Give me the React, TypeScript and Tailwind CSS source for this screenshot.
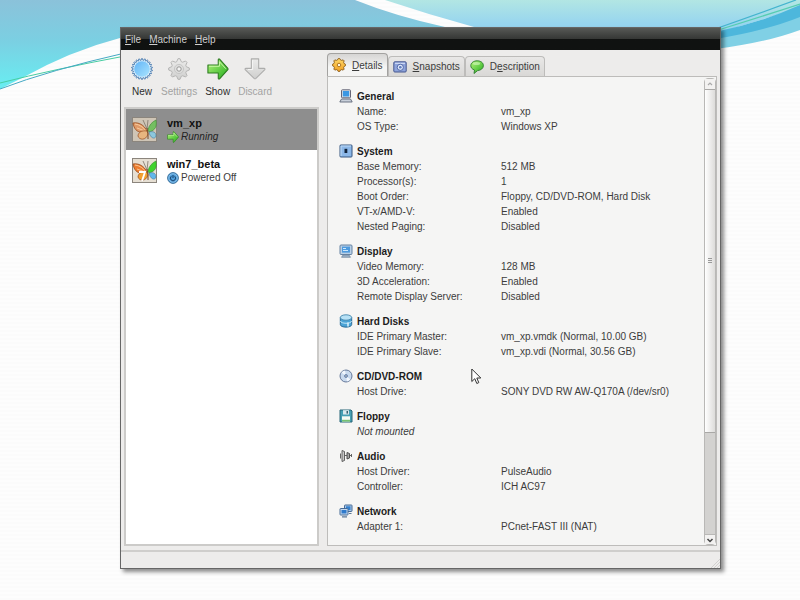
import { useState } from "react";
import type { ReactNode } from "react";

type Row = [label: string, value: string];

interface Section {
    title: string;
    icon: ReactNode;
    rows: Row[];
    note?: string;
}

const gearPath = (teeth: number, outer: number, inner: number) => {
    const points: string[] = [];
    for (let i = 0; i < teeth * 4; i++) {
        const r = i % 4 < 2 ? outer : inner;
        const a = ((i - 0.5) / (teeth * 4)) * Math.PI * 2 - Math.PI / 2;
        points.push(
            `${(12 + r * Math.cos(a)).toFixed(2)},${(12 + r * Math.sin(a)).toFixed(2)}`,
        );
    }
    return `M${points.join("L")}Z`;
};

const Gradients = () => (
    <svg width="0" height="0" className="absolute" aria-hidden="true">
        <defs>
            <linearGradient id="blue" x1="0" y1="0" x2="1" y2="1">
                <stop offset="0" stopColor="#62b4f6" />
                <stop offset="1" stopColor="#a9e4ff" />
            </linearGradient>
            <linearGradient id="green" x1="0" y1="0" x2="1" y2="1">
                <stop offset="0" stopColor="#b6f57c" />
                <stop offset="1" stopColor="#22ad1c" />
            </linearGradient>
            <linearGradient id="grey" x1="0" y1="0" x2="0" y2="1">
                <stop offset="0" stopColor="#ebebea" />
                <stop offset="1" stopColor="#cfcfce" />
            </linearGradient>
            <linearGradient id="gold" x1="0" y1="0" x2="0" y2="1">
                <stop offset="0" stopColor="#ffd968" />
                <stop offset="1" stopColor="#f0a023" />
            </linearGradient>
        </defs>
    </svg>
);

const NewIcon = () => (
    <svg viewBox="0 0 24 24" className="size-[22px]">
        <path d={gearPath(22, 11.4, 9.6)} fill="#d7edfb" stroke="#3a6ea8" strokeWidth="0.9" />
        <circle cx="12" cy="12" r="8.5" fill="url(#blue)" />
    </svg>
);

const SettingsIcon = () => (
    <svg viewBox="0 0 24 24" className="size-[22px]">
        <path
            d={gearPath(8, 11.3, 8.4)}
            fill="url(#grey)"
            stroke="#b0b0af"
            strokeWidth="1"
            strokeLinejoin="round"
        />
        <circle cx="12" cy="12" r="5" fill="#dededd" stroke="#c4c4c3" />
        <circle cx="12" cy="12" r="2.4" fill="#f4f4f3" stroke="#8f8f8e" />
    </svg>
);

const ArrowIcon = ({ className }: { className: string }) => (
    <svg viewBox="0 0 24 24" className={className}>
        <path
            d="M1 7.600h11.300V2q0-1.200 1.400-.8l8.800 9.800q.9 1 0 2l-8.800 9.800q-1.400.4-1.400-.8v-5.600H1z"
            fill="url(#green)"
            stroke="#2f7d22"
            strokeWidth="1.200"
            strokeLinejoin="round"
        />
        <path d="M2.300 9h11.200V4l7 7.700" fill="none" stroke="#d3fbb1" strokeWidth="1" />
    </svg>
);

const DiscardIcon = () => (
    <svg viewBox="0 0 24 24" className="size-[22px]">
        <path
            d="M8 1h8v10.300h6q1.200 0 .7 1.300l-9.700 9.600q-1 .9-2 0l-9.700-9.600q-.5-1.300.7-1.300h6z"
            fill="url(#grey)"
            stroke="#adadac"
            strokeWidth="1.200"
            strokeLinejoin="round"
        />
        <path d="M9.400 2.400v10.200H4.400" fill="none" stroke="#f7f7f6" strokeWidth="1" />
    </svg>
);

const ButterflyIcon = ({ seven = false }: { seven?: boolean }) => (
    <svg viewBox="0 0 25 25" className="h-[25px] w-[25px] shrink-0">
        <rect x="0.5" y="0.5" width="24" height="24" fill={seven ? "#e6dfd3" : "#cfc5b6"} stroke="#8b857d" />
        <path d="M15 12 11 3M15 12l1-9" stroke="#7d7468" strokeWidth="0.8" fill="none" />
        <path
            d="M15 14C12 8 7 5 1 6c1 6 4 9 8 9z"
            fill={seven ? "#ed7d30" : "#df9a69"}
            stroke="#974a1c"
            strokeWidth="0.8"
        />
        <path d="M3 7q7 1 11 7M5 11l8 3" stroke="#ffd7a8" strokeWidth="0.8" fill="none" />
        <path
            d="M15 14c-6-1-9 2-9 5 1 4 8 5 10-2z"
            fill={seven ? "#f4a12f" : "#e8b57f"}
            stroke="#974a1c"
            strokeWidth="0.7"
        />
        <path d="M16 13c1-5 4-8 8-10 1 6 0 10-7 12z" fill={seven ? "#3fd32d" : "#74bf61"} stroke="#3b8a33" strokeWidth="0.6" />
        <path d="M17 15c4-1 7 0 7 4-1 4-6 2-7-4z" fill={seven ? "#62b7ec" : "#8cc7dd"} stroke="#43789c" strokeWidth="0.6" />
        <path d="M15 11q1.500 5 1 11" stroke="#7b4a2a" strokeWidth="1" fill="none" />
        {seven && <path d="M7 14h6l-3 9" stroke="#fff" strokeWidth="1.900" fill="none" />}
    </svg>
);

const PowerIcon = () => (
    <svg viewBox="0 0 14 14" className="size-3">
        <circle cx="7" cy="7" r="6.3" fill="#4d9bd8" stroke="#29618f" />
        <circle cx="7" cy="7" r="4.9" fill="none" stroke="#a5d5f4" strokeWidth="0.8" />
        <path d="M5 5a3 3 0 1 0 4 0M7 3.500v3.500" stroke="#163f66" strokeWidth="1.100" fill="none" />
    </svg>
);

const GoldGearIcon = () => (
    <svg viewBox="0 0 24 24" className="size-3.5">
        <path d={gearPath(8, 11.3, 9)} fill="url(#gold)" stroke="#8a5a18" strokeWidth="1.6" strokeLinejoin="round" />
        <circle cx="12" cy="12" r="3" fill="#fff6dd" stroke="#a66a16" strokeWidth="1.5" />
    </svg>
);

const CameraIcon = () => (
    <svg viewBox="0 0 14 14" className="size-3.5">
        <rect x="0.8" y="1.800" width="12.400" height="10.200" rx="1" fill="#8ea4dc" stroke="#45568f" />
        <path d="M2 3.300h10" stroke="#dbe4fb" strokeWidth="1" />
        <circle cx="7.300" cy="7.300" r="3.100" fill="#dce7fb" stroke="#4b609f" strokeWidth="0.9" />
        <circle cx="7.300" cy="7.300" r="1.300" fill="#5c79bd" />
    </svg>
);

const BubbleIcon = () => (
    <svg viewBox="0 0 14 14" className="size-3.5">
        <path
            d="M7.200.8c3.500 0 6.200 2 6.200 4.800s-2.800 4.900-5.800 5L4 13.500l.5-3.500C2 9.200.8 7.500.8 5.700.8 2.800 3.800.8 7.200.8z"
            fill="url(#green)"
            stroke="#2b7a2c"
            strokeWidth="0.9"
        />
        <ellipse cx="6.500" cy="3.600" rx="3.600" ry="1.500" fill="#d4f9c0" opacity="0.6" />
    </svg>
);

const Small = ({ children }: { children: ReactNode }) => (
    <svg viewBox="0 0 14 14" className="size-3.5 shrink-0" aria-hidden="true">
        {children}
    </svg>
);

const sections: Section[] = [
    {
        title: "General",
        icon: (
            <Small>
                <rect x="2.500" y="0.800" width="9" height="8" rx="0.800" fill="#dfe4ea" stroke="#667" />
                <rect x="3.800" y="2" width="6.400" height="5.500" fill="#3b97e3" />
                <path d="M2.500 10h9l1.700 3H.8z" fill="#c9d0da" stroke="#5f6878" strokeWidth="0.9" />
            </Small>
        ),
        rows: [
            ["Name:", "vm_xp"],
            ["OS Type:", "Windows XP"],
        ],
    },
    {
        title: "System",
        icon: (
            <Small>
                <rect x="1" y="1" width="12" height="12" rx="0.800" fill="#8bb7e8" stroke="#35547e" />
                <path d="M2 12V2h10" fill="none" stroke="#c0dbf6" />
                <rect x="5.500" y="4.800" width="2.800" height="4.200" fill="#10243d" />
            </Small>
        ),
        rows: [
            ["Base Memory:", "512 MB"],
            ["Processor(s):", "1"],
            ["Boot Order:", "Floppy, CD/DVD-ROM, Hard Disk"],
            ["VT-x/AMD-V:", "Enabled"],
            ["Nested Paging:", "Disabled"],
        ],
    },
    {
        title: "Display",
        icon: (
            <Small>
                <rect x="1" y="1" width="12" height="9.500" rx="1" fill="#b8cfe6" stroke="#6482a2" />
                <rect x="3" y="2.600" width="8" height="6" fill="#4d9ade" />
                <path d="M4 4.500h3M4 6.500h5" stroke="#cde7fb" />
                <path d="M4 11h6l1.500 2.300h-9z" fill="#9db2c8" stroke="#6d8299" strokeWidth="0.7" />
            </Small>
        ),
        rows: [
            ["Video Memory:", "128 MB"],
            ["3D Acceleration:", "Enabled"],
            ["Remote Display Server:", "Disabled"],
        ],
    },
    {
        title: "Hard Disks",
        icon: (
            <Small>
                <path d="M1.300 3.500v7c0 3.500 11.400 3.500 11.400 0v-7z" fill="#4aa3d6" stroke="#2b6d99" />
                <ellipse cx="7" cy="3.500" rx="5.700" ry="2.700" fill="#b7e1f5" stroke="#4588ae" strokeWidth="0.9" />
                <path d="M1.500 7c0 3 11 3 11 0" fill="none" stroke="#bfe6f8" />
                <path d="M9 8.500v4" stroke="#dff3fc" strokeWidth="1.500" />
            </Small>
        ),
        rows: [
            ["IDE Primary Master:", "vm_xp.vmdk (Normal, 10.00 GB)"],
            ["IDE Primary Slave:", "vm_xp.vdi (Normal, 30.56 GB)"],
        ],
    },
    {
        title: "CD/DVD-ROM",
        icon: (
            <Small>
                <circle cx="7" cy="7" r="6" fill="#c9daee" stroke="#66799a" />
                <path d="M7 7 2.500 3.500A6 6 0 0 1 6 1.500zM7 7l4.500 3.500A6 6 0 0 1 8 12.500z" fill="#f2f7fd" />
                <circle cx="7" cy="7" r="1.500" fill="#fff" stroke="#4c6da0" strokeWidth="0.8" />
                <circle cx="7" cy="7" r="0.700" fill="#1f3558" />
            </Small>
        ),
        rows: [["Host Drive:", "SONY DVD RW AW-Q170A (/dev/sr0)"]],
    },
    {
        title: "Floppy",
        icon: (
            <Small>
                <path d="M1 1h11l1 1v11H1z" fill="#46a0b4" stroke="#286678" />
                <rect x="4" y="1.200" width="6" height="4.300" fill="#dbe9ee" />
                <rect x="7.500" y="2" width="1.500" height="2.600" fill="#37606e" />
                <rect x="3" y="7.300" width="8" height="5.300" fill="#f6fbf4" />
                <rect x="3" y="10.800" width="8" height="1.800" fill="#76c173" />
            </Small>
        ),
        rows: [],
        note: "Not mounted",
    },
    {
        title: "Audio",
        icon: (
            <Small>
                <path d="M3 1.500 5.500 2.500v9L3 12.500z" fill="#c9c9c9" stroke="#555" strokeWidth="0.9" />
                <path d="M8 3.500l2.500 1v4.500l-2.500 1z" fill="#a5a5a5" stroke="#444" strokeWidth="0.9" />
                <path d="M1.500 4.500v5M5.500 6.500H8M10.500 6.500h2M12.500 5v3" fill="none" stroke="#555" strokeWidth="0.9" />
            </Small>
        ),
        rows: [
            ["Host Driver:", "PulseAudio"],
            ["Controller:", "ICH AC97"],
        ],
    },
    {
        title: "Network",
        icon: (
            <Small>
                <rect x="5.500" y="1" width="7.500" height="6.500" rx="0.600" fill="#a9c6e6" stroke="#456a96" />
                <rect x="7" y="2.300" width="4.500" height="3.700" fill="#3481cf" />
                <rect x="1" y="4.500" width="8" height="6.500" rx="0.600" fill="#c4d9f0" stroke="#456a96" />
                <rect x="2.500" y="6" width="5" height="3.500" fill="#2f7acb" />
                <path d="M3 12.800h5M10 9.500h2.500" stroke="#5d7896" strokeWidth="1.200" />
            </Small>
        ),
        rows: [["Adapter 1:", "PCnet-FAST III (NAT)"]],
    },
];

const Backdrop = () => (
    <div className="absolute inset-0 -z-10 overflow-hidden bg-[repeating-linear-gradient(#fdfdfd_0px_2px,#fbfbfb_2px_4px)]">
        <svg viewBox="0 0 800 100" preserveAspectRatio="none" className="h-[100px] w-full" aria-hidden="true">
            <defs>
                <linearGradient id="sky" x1="0" y1="0" x2="0" y2="1">
                    <stop offset="0" stopColor="#8bc2da" />
                    <stop offset="0.450" stopColor="#7bcfe2" />
                    <stop offset="1" stopColor="#68eef2" />
                </linearGradient>
                <linearGradient id="mist" x1="0" y1="0" x2="0" y2="1">
                    <stop offset="0" stopColor="#b2e6e3" />
                    <stop offset="0.600" stopColor="#97d5ef" />
                </linearGradient>
            </defs>
            <path d="M0 0H355Q395 16 445 27L440 50L120 38Q70 51 22 78L0 89Z" fill="url(#sky)" />
            <path d="M385 0H800V8L721 32V40H520L474 27Q430 15 385 0Z" fill="url(#mist)" />
            <path d="M715 33Q765 23 800 6V30Q765 43 715 49Z" fill="#80d0e5" />
            <path d="M715 32Q760 23 800 5V17Q765 31 715 39Z" fill="#4db7dc" />
            <path d="M0 83Q55 69 125 56" fill="none" stroke="#48cda2" />
            <path d="M0 89Q50 70 125 53" fill="none" stroke="#45a9c4" />
            <path d="M715 29Q755 15 796 0" fill="none" stroke="#43b4ce" strokeWidth="1.300" />
            <path d="M715 31Q760 17 800 4" fill="none" stroke="#56cdb0" strokeWidth="1.300" />
        </svg>
    </div>
);

const tabs = [
    { id: "details", icon: <GoldGearIcon />, label: <><u>D</u>etails</> },
    { id: "snapshots", icon: <CameraIcon />, label: <><u>S</u>napshots</> },
    { id: "description", icon: <BubbleIcon />, label: <>D<u>e</u>scription</> },
];

const machines = [
    { name: "vm_xp", running: true },
    { name: "win7_beta", running: false },
];

const ToolButton = ({ label, icon, disabled }: { label: string; icon: ReactNode; disabled?: boolean }) => (
    <button type="button" disabled={disabled} className="flex flex-col items-center gap-1 text-[#2e2e2e] disabled:text-[#a3a3a2]">
        {icon}
        <span>{label}</span>
    </button>
);

const ScrollBar = () => (
    <div className="mt-px flex w-3 flex-col rounded-sm border border-[#b9b8b6] bg-[#d3d2d0]">
        <button type="button" aria-label="Scroll up" className="flex h-2.5 items-center justify-center bg-[#f3f2f1]">
            <svg viewBox="0 0 8 6" className="h-1.5 w-2">
                <path d="M2 4l2-2 2 2" fill="none" stroke="#aaa" strokeWidth="1.200" />
            </svg>
        </button>
        <div className="flex grow-[10] flex-col items-center justify-center gap-px border-y border-[#a9a8a6] bg-linear-to-r from-white to-[#dddcda]">
            <span className="h-px w-1 bg-[#999]" />
            <span className="h-px w-1 bg-[#999]" />
            <span className="h-px w-1 bg-[#999]" />
        </div>
        <div className="grow-[3]" />
        <button type="button" aria-label="Scroll down" className="flex h-2.5 items-center justify-center border-t border-[#b9b8b6] bg-[#f3f2f1]">
            <svg viewBox="0 0 8 6" className="h-1.5 w-2">
                <path d="M1.500 2 4 4.500 6.500 2" fill="none" stroke="#444" strokeWidth="1.500" />
            </svg>
        </button>
    </div>
);

const App = () => {
    const [tab, setTab] = useState("details");
    const [selected, setSelected] = useState("vm_xp");

    return (
        <div className="relative isolate flex min-h-screen flex-col pt-[27px] pr-[79px] pb-[31px] pl-[15%] font-['Liberation_Sans',Arial,sans-serif] text-[10px] leading-[15px] text-[#3c3c3c]">
            <Gradients />
            <Backdrop />

            <main className="flex flex-1 flex-col border border-[#666] bg-[#edeceb] shadow-[3px_3px_4px_rgba(0,0,0,0.45)]">
                <nav className="flex h-[22px] items-center gap-2 bg-linear-to-b from-[#575956] from-0% via-[#363836] via-48% to-[#101211] to-52% px-1 text-[#cfcfcf]">
                    <button type="button"><u>F</u>ile</button>
                    <button type="button"><u>M</u>achine</button>
                    <button type="button"><u>H</u>elp</button>
                </nav>

                <div className="grid flex-1 grid-cols-[1fr_2fr] gap-2 px-[3px] pb-1">
                    <div className="flex flex-col">
                        <div className="flex gap-2 py-2 pl-[7px]">
                            <ToolButton label="New" icon={<NewIcon />} />
                            <ToolButton label="Settings" icon={<SettingsIcon />} disabled />
                            <ToolButton label="Show" icon={<ArrowIcon className="size-[22px]" />} />
                            <ToolButton label="Discard" icon={<DiscardIcon />} disabled />
                        </div>

                        <ul className="flex-1 border-2 border-[#cccbc9] bg-white">
                            {machines.map((m) => (
                                <li key={m.name}>
                                    <button
                                        type="button"
                                        onClick={() => setSelected(m.name)}
                                        className={`flex h-[41px] w-full items-center gap-2.5 px-1.5 text-left ${
                                            selected === m.name ? "bg-[#8e8e8e]" : ""
                                        }`}
                                    >
                                        <ButterflyIcon seven={!m.running} />
                                        <span className="flex flex-col leading-[14px]">
                                            <strong className="text-[11px] text-[#111]">{m.name}</strong>
                                            <span className="flex items-center gap-0.5">
                                                {m.running ? <ArrowIcon className="size-3" /> : <PowerIcon />}
                                                <span className={m.running ? "text-[#222] italic" : ""}>
                                                    {m.running ? "Running" : "Powered Off"}
                                                </span>
                                            </span>
                                        </span>
                                    </button>
                                </li>
                            ))}
                        </ul>
                    </div>

                    <div className="flex flex-col pt-[3px]">
                        <div role="tablist" className="flex items-end">
                            {tabs.map((t) => (
                                <button
                                    key={t.id}
                                    type="button"
                                    role="tab"
                                    aria-selected={tab === t.id}
                                    onClick={() => setTab(t.id)}
                                    className={`flex items-center gap-1.5 rounded-t-sm border border-b-0 px-1 ${
                                        tab === t.id
                                            ? "h-[23px] border-[#a3a2a0] bg-linear-to-b from-[#d6d5d4] to-[#f5f5f4] to-60%"
                                            : "h-5 border-[#bdbcba] bg-linear-to-b from-[#e9e8e7] to-[#d9d8d6]"
                                    }`}
                                >
                                    {t.icon}
                                    <span>{t.label}</span>
                                </button>
                            ))}
                        </div>

                        <div role="tabpanel" className="flex flex-1 border border-[#bdbcba] bg-[#f5f5f4]">
                            <div className="flex flex-1 flex-col gap-2.5 pt-3 pb-2 pl-[11px]">
                                {sections.map((s) => (
                                    <section key={s.title} className="flex gap-1">
                                        {s.icon}
                                        <div className="flex-1">
                                            <h2 className="font-bold text-[#1c1c1c]">{s.title}</h2>
                                            {s.note && <p className="italic">{s.note}</p>}
                                            {s.rows.length > 0 && (
                                                <table className="w-full table-fixed">
                                                    <tbody>
                                                        {s.rows.map(([label, value]) => (
                                                            <tr key={label}>
                                                                <th scope="row" className="w-36 p-0 text-left font-normal">
                                                                    {label}
                                                                </th>
                                                                <td className="p-0">{value}</td>
                                                            </tr>
                                                        ))}
                                                    </tbody>
                                                </table>
                                            )}
                                        </div>
                                    </section>
                                ))}
                            </div>
                            <ScrollBar />
                        </div>
                    </div>
                </div>

                <footer className="flex h-[18px] items-end justify-end border-t-2 border-[#cfcecc]">
                    <svg viewBox="0 0 10 10" className="size-2.5" aria-hidden="true">
                        <path d="M1 10 10 1M4 10l6-6M7 10l3-3" stroke="#d2d1cf" />
                    </svg>
                </footer>
            </main>

            <svg viewBox="0 0 11 17" className="absolute top-[368px] left-[471px] h-[17px] w-[11px]" aria-hidden="true">
                <path d="M.8 1v12.500l3-2.800 2 4.800 2-.9-2-4.600h4z" fill="#fff" stroke="#333" />
            </svg>
        </div>
    );
};

export default App;
